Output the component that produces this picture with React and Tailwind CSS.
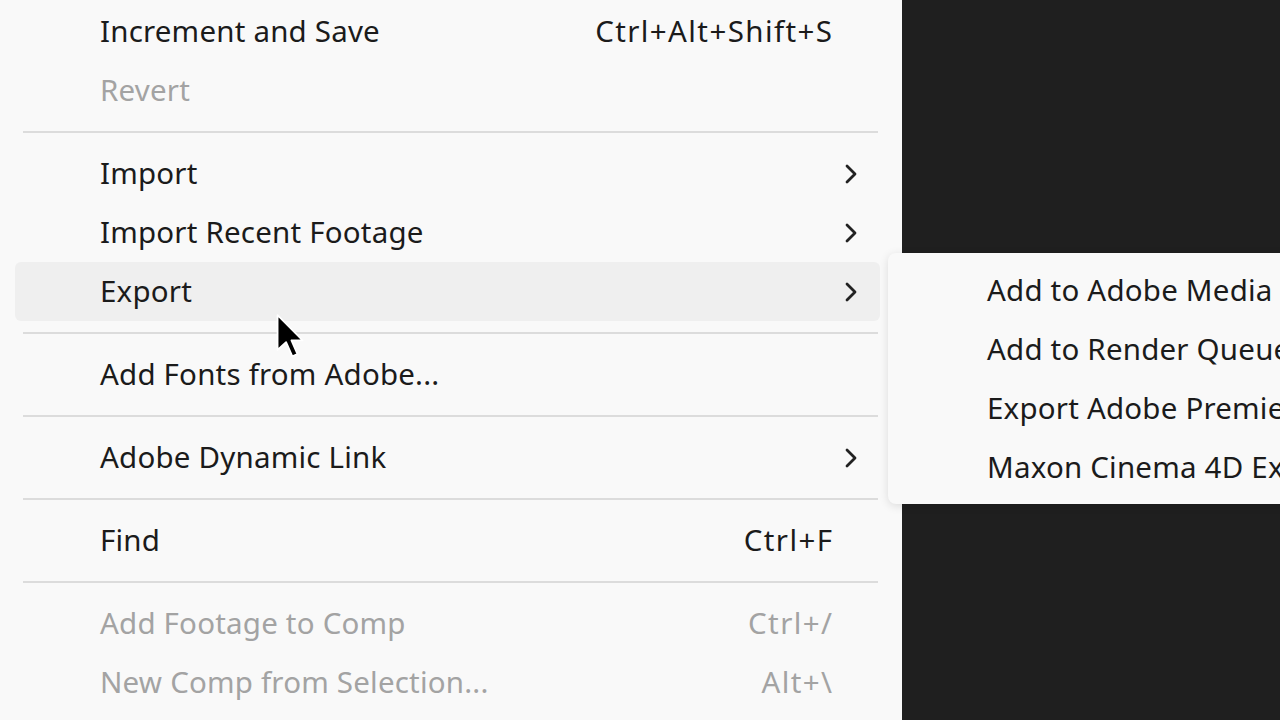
import React from "react";

const mainItems = [
  { label: "Increment and Save", shortcut: "Ctrl+Alt+Shift+S" },
  { label: "Revert", disabled: true },
  { sep: true },
  { label: "Import", sub: true },
  { label: "Import Recent Footage", sub: true },
  { label: "Export", sub: true, active: true },
  { sep: true },
  { label: "Add Fonts from Adobe..." },
  { sep: true },
  { label: "Adobe Dynamic Link", sub: true },
  { sep: true },
  { label: "Find", shortcut: "Ctrl+F" },
  { sep: true },
  { label: "Add Footage to Comp", shortcut: "Ctrl+/", disabled: true },
  { label: "New Comp from Selection...", shortcut: "Alt+\\", disabled: true },
];

const exportItems = [
  "Add to Adobe Media Encoder Queue...",
  "Add to Render Queue",
  "Export Adobe Premiere Pro Project...",
  "Maxon Cinema 4D Exporter...",
];

function Chevron() {
  return (
    <svg width="14" height="22" viewBox="0 0 14 22" fill="none">
      <path d="M3 3 L11 11 L3 19" stroke="#222" strokeWidth="2.8" strokeLinecap="round" strokeLinejoin="round" />
    </svg>
  );
}

function Cursor() {
  return (
    <svg width="32" height="47" viewBox="0 0 14 21" className="absolute left-[275px] top-[313px]">
      <path d="M1 1 L1 16.5 L4.8 13 L7.6 19.4 L9.9 18.4 L7.2 12.2 L12.2 12.2 Z" fill="#000" stroke="#fff" strokeWidth="0.8" strokeLinejoin="round" />
    </svg>
  );
}

function MenuRow({ item }) {
  const color = item.disabled ? "text-[#a3a3a3]" : "text-[#1b1b1b]";
  return (
    <div className={"flex items-center h-[59px] rounded-md " + (item.active ? "bg-[#efefef]" : "")}>
      <span className={"flex-1 pl-[85px] tracking-[0.2px] " + color}>{item.label}</span>
      {item.shortcut && <span className={"tracking-[1.4px] -mr-[1.4px] " + color}>{item.shortcut}</span>}
      <span className="w-[48px] pl-[12px] flex items-center">{item.sub && <Chevron />}</span>
    </div>
  );
}

export default function App() {
  return (
    <div
      className="relative w-[1280px] h-[720px] overflow-hidden flex bg-[#1f1f1f] text-[29.5px]"
      style={{ fontFamily: '"Noto Sans", "Open Sans", sans-serif' }}
    >
      <div className="w-[902px] h-full bg-[#f9f9f9] pl-[15px] pr-[22px] pt-[2px]">
        {mainItems.map((item, i) =>
          item.sep ? (
            <div key={i} className="h-[24px] flex items-center pl-[8px] pr-[2px]">
              <div className="h-[2px] w-full bg-[#dcdcdc]" />
            </div>
          ) : (
            <MenuRow key={i} item={item} />
          )
        )}
      </div>
      <div className="flex-1" />

      <div className="absolute left-[888px] top-[253px] w-[600px] h-[251px] bg-[#f9f9f9] rounded-lg shadow-[0_2px_10px_rgba(0,0,0,0.12)] pt-[8px]">
        {exportItems.map((t) => (
          <div key={t} className="h-[59px] flex items-center pl-[99px] tracking-[0.2px] text-[#1b1b1b] whitespace-nowrap">
            {t}
          </div>
        ))}
      </div>

      <Cursor />
    </div>
  );
}
